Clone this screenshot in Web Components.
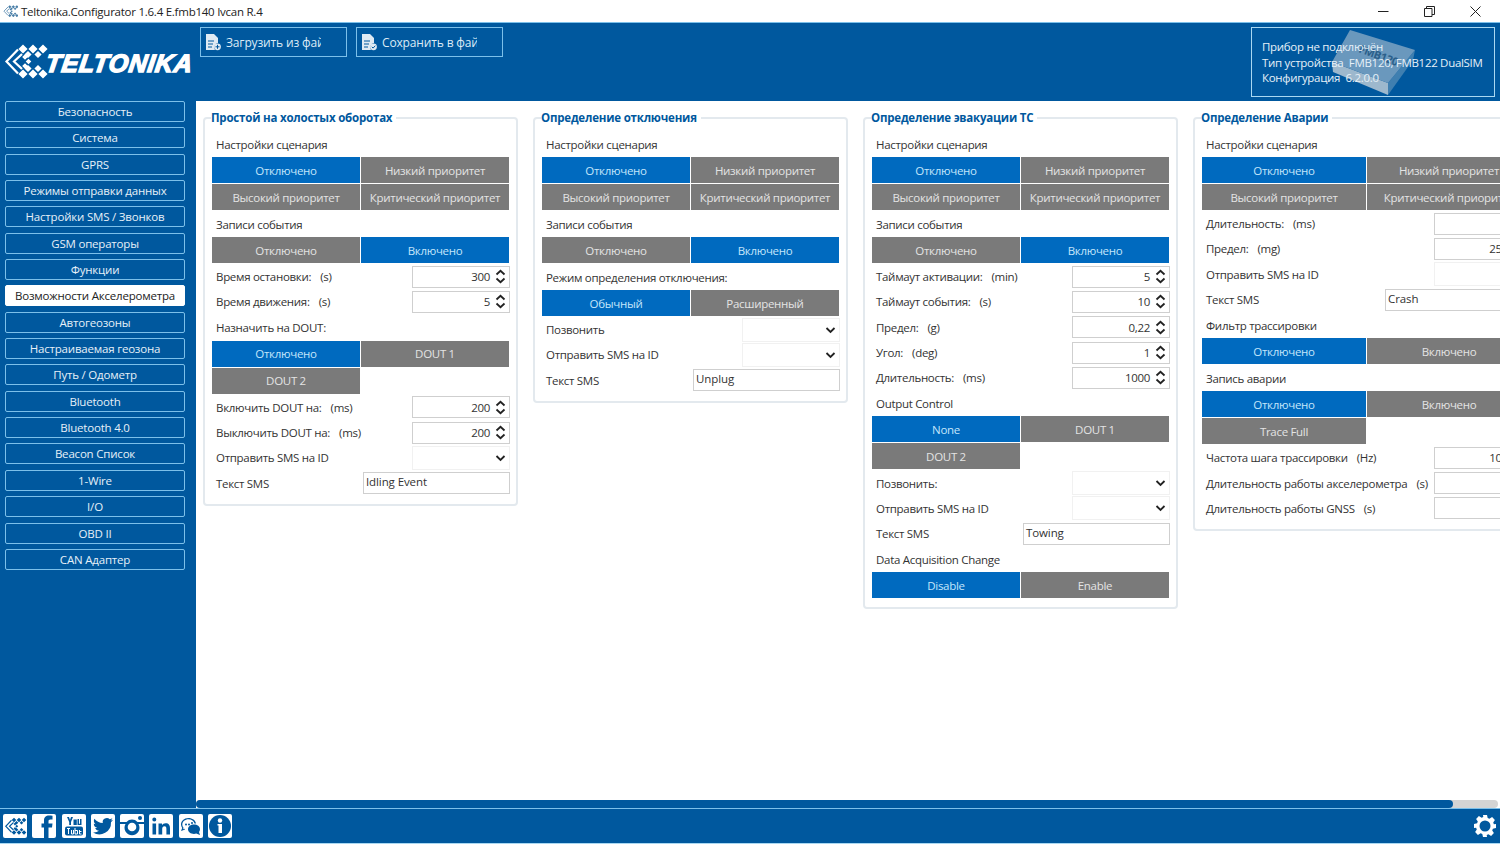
<!DOCTYPE html>
<html lang="ru">
<head>
<meta charset="utf-8">
<title>Teltonika.Configurator</title>
<style>
  html, body { margin: 0; height: 100%; overflow: hidden; background: #fff; }
  body { font-family: "Open Sans", "Noto Sans", sans-serif; font-size: 11.5px; color: #333; }
</style>
</head>
<body>

<tk-app>
  <tk-titlebar slot="title">Teltonika.Configurator 1.6.4 E.fmb140 Ivcan R.4</tk-titlebar>
  <tk-header slot="header"></tk-header>
  <tk-nav slot="nav">
    <tk-nav-item>Безопасность</tk-nav-item>
    <tk-nav-item>Система</tk-nav-item>
    <tk-nav-item>GPRS</tk-nav-item>
    <tk-nav-item>Режимы отправки данных</tk-nav-item>
    <tk-nav-item>Настройки SMS / Звонков</tk-nav-item>
    <tk-nav-item>GSM операторы</tk-nav-item>
    <tk-nav-item>Функции</tk-nav-item>
    <tk-nav-item active>Возможности Акселерометра</tk-nav-item>
    <tk-nav-item>Автогеозоны</tk-nav-item>
    <tk-nav-item>Настраиваемая геозона</tk-nav-item>
    <tk-nav-item>Путь / Одометр</tk-nav-item>
    <tk-nav-item>Bluetooth</tk-nav-item>
    <tk-nav-item>Bluetooth 4.0</tk-nav-item>
    <tk-nav-item>Beacon Список</tk-nav-item>
    <tk-nav-item>1-Wire</tk-nav-item>
    <tk-nav-item>I/O</tk-nav-item>
    <tk-nav-item>OBD II</tk-nav-item>
    <tk-nav-item>CAN Адаптер</tk-nav-item>
  </tk-nav>

  <tk-panel title="Простой на холостых оборотах">
    <tk-label>Настройки сценария</tk-label>
    <tk-options selected="0" options="Отключено|Низкий приоритет|Высокий приоритет|Критический приоритет"></tk-options>
    <tk-label>Записи события</tk-label>
    <tk-options selected="1" options="Отключено|Включено"></tk-options>
    <tk-field label="Время остановки:" unit="(s)" kind="spin" value="300"></tk-field>
    <tk-field label="Время движения:" unit="(s)" kind="spin" value="5"></tk-field>
    <tk-label>Назначить на DOUT:</tk-label>
    <tk-options selected="0" options="Отключено|DOUT 1|DOUT 2"></tk-options>
    <tk-field label="Включить DOUT на:" unit="(ms)" kind="spin" value="200"></tk-field>
    <tk-field label="Выключить DOUT на:" unit="(ms)" kind="spin" value="200"></tk-field>
    <tk-field label="Отправить SMS на ID" kind="select"></tk-field>
    <tk-field label="Текст SMS" kind="text" value="Idling Event"></tk-field>
  </tk-panel>

  <tk-panel title="Определение отключения">
    <tk-label>Настройки сценария</tk-label>
    <tk-options selected="0" options="Отключено|Низкий приоритет|Высокий приоритет|Критический приоритет"></tk-options>
    <tk-label>Записи события</tk-label>
    <tk-options selected="1" options="Отключено|Включено"></tk-options>
    <tk-label>Режим определения отключения:</tk-label>
    <tk-options selected="0" options="Обычный|Расширенный"></tk-options>
    <tk-field label="Позвонить" kind="select"></tk-field>
    <tk-field label="Отправить SMS на ID" kind="select"></tk-field>
    <tk-field label="Текст SMS" kind="text" value="Unplug"></tk-field>
  </tk-panel>

  <tk-panel title="Определение эвакуации ТС">
    <tk-label>Настройки сценария</tk-label>
    <tk-options selected="0" options="Отключено|Низкий приоритет|Высокий приоритет|Критический приоритет"></tk-options>
    <tk-label>Записи события</tk-label>
    <tk-options selected="1" options="Отключено|Включено"></tk-options>
    <tk-field label="Таймаут активации:" unit="(min)" kind="spin" value="5"></tk-field>
    <tk-field label="Таймаут события:" unit="(s)" kind="spin" value="10"></tk-field>
    <tk-field label="Предел:" unit="(g)" kind="spin" value="0,22"></tk-field>
    <tk-field label="Угол:" unit="(deg)" kind="spin" value="1"></tk-field>
    <tk-field label="Длительность:" unit="(ms)" kind="spin" value="1000"></tk-field>
    <tk-label>Output Control</tk-label>
    <tk-options selected="0" options="None|DOUT 1|DOUT 2"></tk-options>
    <tk-field label="Позвонить:" kind="select"></tk-field>
    <tk-field label="Отправить SMS на ID" kind="select"></tk-field>
    <tk-field label="Текст SMS" kind="text" value="Towing"></tk-field>
    <tk-label>Data Acquisition Change</tk-label>
    <tk-options selected="0" options="Disable|Enable"></tk-options>
  </tk-panel>

  <tk-panel wide title="Определение Аварии">
    <tk-label>Настройки сценария</tk-label>
    <tk-options selected="0" options="Отключено|Низкий приоритет|Высокий приоритет|Критический приоритет"></tk-options>
    <tk-field label="Длительность:" unit="(ms)" kind="spin" value=""></tk-field>
    <tk-field label="Предел:" unit="(mg)" kind="spin" value="250"></tk-field>
    <tk-field label="Отправить SMS на ID" kind="select"></tk-field>
    <tk-field label="Текст SMS" kind="text" value="Crash"></tk-field>
    <tk-label>Фильтр трассировки</tk-label>
    <tk-options selected="0" options="Отключено|Включено"></tk-options>
    <tk-label>Запись аварии</tk-label>
    <tk-options selected="0" options="Отключено|Включено|Trace Full"></tk-options>
    <tk-field label="Частота шага трассировки" unit="(Hz)" kind="spin" value="100"></tk-field>
    <tk-field label="Длительность работы акселерометра" unit="(s)" kind="spin" value=""></tk-field>
    <tk-field label="Длительность работы GNSS" unit="(s)" kind="spin" value=""></tk-field>
  </tk-panel>

  <tk-footer slot="footer"></tk-footer>
</tk-app>

<script>
const BLUE = "#00589e";

// chevrons and diamonds of the logo, in a 50x50 box
function logoShapes(color) {
  let d = "";
  const dia = (x, y, r) => { d += `M${x} ${y - r}L${x + r} ${y}L${x} ${y + r}L${x - r} ${y}Z`; };
  [23, 33, 43].forEach(x => { dia(x, 13, 4.6); dia(x, 38, 4.6); });
  [28, 38].forEach(x => { dia(x, 18.5, 3.6); dia(x, 32.5, 3.6); });
  dia(25, 21, 2.8); dia(28.5, 25.5, 2.8); dia(25, 30, 2.8);
  return `<path fill="${color}" d="${d}"/>
    <path fill="none" stroke="${color}" stroke-width="2.2" d="M18 13.500 6.500 25.500 18 37.500M22 18 14 25.500 22 33"/>`;
}
function logoMark(color, viewBox) {
  return `<svg viewBox="${viewBox}" width="100%" height="100%">${logoShapes(color)}</svg>`;
}

class TkApp extends HTMLElement {
  constructor() {
    super();
    this.attachShadow({ mode: "open" }).innerHTML = `
      <style>
        :host { display: grid; width: 1500px; height: 844px; overflow: hidden;
                grid-template-rows: 22px 79px 1fr 36px; grid-template-columns: 196px 1fr; background: ${BLUE}; }
        ::slotted([slot=title]) { grid-column: 1 / 3; }
        ::slotted([slot=header]) { grid-column: 1 / 3; }
        ::slotted([slot=footer]) { grid-column: 1 / 3; }
        #main { background: #fff; display: flex; flex-direction: column; min-width: 0; overflow: hidden; }
        #panels { flex: 1; display: flex; align-items: flex-start; gap: 15px; padding: 9px 0 0 7px; min-height: 0; }
        #track { height: 8px; margin-right: 2px; background: #d4d4d4; border-radius: 4px; }
        #thumb { width: 1257px; height: 100%; background: ${BLUE}; border-radius: 4px; }
      </style>
      <slot name="title"></slot>
      <slot name="header"></slot>
      <slot name="nav"></slot>
      <div id="main">
        <div id="panels"><slot></slot></div>
        <div id="track"><div id="thumb"></div></div>
      </div>
      <slot name="footer"></slot>`;
  }
}
customElements.define("tk-app", TkApp);

class TkTitlebar extends HTMLElement {
  constructor() {
    super();
    this.attachShadow({ mode: "open" }).innerHTML = `
      <style>
        :host { display: flex; align-items: center; height: 22px; background: #fff; color: #222; font-size: 11.5px; }
        #icon { width: 15px; height: 12px; margin: 0 3px 0 3px; }
        #text { flex: 1; letter-spacing: -0.25px; }
        .win { width: 46px; height: 22px; display: flex; align-items: center; justify-content: center; }
      </style>
      <div id="icon">${logoMark("#4a7fa8", "4 8 42 34")}</div>
      <div id="text"><slot></slot></div>
      <div class="win"><svg width="11" height="11"><path d="M0 5.5H10.5" stroke="#222"/></svg></div>
      <div class="win"><svg width="11" height="11" fill="none" stroke="#222"><path d="M.5 2.5h7.500v8h-7.500zM2.500 2.500v-2h8v8h-2.500"/></svg></div>
      <div class="win" style="margin-right:2px"><svg width="11" height="11" stroke="#222"><path d="M.5.5l10 10M10.500.5l-10 10"/></svg></div>`;
  }
}
customElements.define("tk-titlebar", TkTitlebar);

class TkHeader extends HTMLElement {
  constructor() {
    super();
    const fileIcon = badge => `<svg width="15" height="17" viewBox="0 0 15 17">
      <path fill="#dfeaf3" d="M0 0h8l4 4v5a4.500 4.500 0 0 0-3 7H0z"/>
      <path stroke="${BLUE}" d="M2 7h6M2 10h5M2 13h4"/>
      <circle cx="11.500" cy="12.800" r="3.400" fill="#dfeaf3"/>
      <path stroke="${BLUE}" fill="none" d="${badge}"/></svg>`;
    this.attachShadow({ mode: "open" }).innerHTML = `
      <style>
        :host { display: flex; height: 79px; background: ${BLUE}; border-top: 1px solid #7cc0ea; box-sizing: border-box; color: #dcebf6; }
        #logo { width: 200px; flex: none; display: flex; align-items: center; box-sizing: border-box; height: 78px; }
        #mark { width: 50px; height: 50px; flex: none; margin: -3px -4px 0 0; }
        #word { font: italic 700 25px "Liberation Sans", sans-serif; color: #fff; -webkit-text-stroke: 1.4px #fff; letter-spacing: 0.7px;
                margin-top: 3px; transform: skewX(-8deg); }
        #files { display: flex; gap: 9px; align-items: flex-start; padding-top: 4px; font-size: 12px; letter-spacing: -0.15px; }
        .file { width: 147px; height: 30px; box-sizing: border-box; border: 1px solid #7cc0ea; display: flex; align-items: center; gap: 5px; padding-left: 5px; overflow: hidden; white-space: nowrap; }
        .file span { width: 95px; overflow: hidden; }
        #spacer { flex: 1; }
        #device { position: relative; width: 244px; height: 70px; box-sizing: border-box; margin: 4px 5px 0 0; border: 1px solid #a9d8f2;
                  padding: 11px 0 0 10px; line-height: 15.5px; white-space: nowrap; color: #e6f0f8; font-size: 11.5px; letter-spacing: -0.3px; }
        #chip { position: absolute; left: 80px; top: 0; width: 85px; height: 68px; }
        #lines { position: relative; }
      </style>
      <div id="logo"><div id="mark">${logoMark("#fff", "0 0 50 50")}</div><div id="word">TELTONIKA</div></div>
      <div id="files">
        <div class="file">${fileIcon("M11.500 10.800v4M9.500 12.800h4")}<span>Загрузить из файла</span></div>
        <div class="file">${fileIcon("M9.800 12.800l1.300 1.300 2.200-2.400")}<span>Сохранить в файл</span></div>
      </div>
      <div id="spacer"></div>
      <div id="device">
        <svg id="chip" viewBox="0 0 85 68">
          <path fill="#9db8cd" d="M0 34 56 55 56 67 1 44Z"/>
          <path fill="#3f7fb0" d="M56 55 83 22 81 32 56 67Z"/>
          <path fill="#6a98bd" d="M18 2 83 22 56 55 0 34Z"/>
          <text x="0" y="0" transform="translate(26 24) rotate(20)" font-size="11" font-weight="700" fill="#2a5f8a">FMB120</text>
        </svg>
        <div id="lines">Прибор не подключён<br>Тип устройства &nbsp;FMB120, FMB122 DualSIM<br>Конфигурация &nbsp;6.2.0.0</div>
      </div>`;
  }
}
customElements.define("tk-header", TkHeader);

class TkNav extends HTMLElement {
  constructor() {
    super();
    this.attachShadow({ mode: "open" }).innerHTML = `
      <style>
        :host { display: flex; flex-direction: column; gap: 5.35px; padding: 0 11px 0 5px; background: ${BLUE}; }
      </style><slot></slot>`;
  }
}
customElements.define("tk-nav", TkNav);

class TkNavItem extends HTMLElement {
  constructor() {
    super();
    this.attachShadow({ mode: "open" }).innerHTML = `
      <style>
        :host { display: flex; align-items: center; justify-content: center; height: 21px; box-sizing: border-box;
                border: 1.5px solid #7cc0ea; border-radius: 2px; color: #e6f0f8; font-size: 11.5px; white-space: nowrap; letter-spacing: -0.2px; }
        :host([active]) { background: #fff; color: #222; border-color: #fff; }
      </style><slot></slot>`;
  }
}
customElements.define("tk-nav-item", TkNavItem);

class TkPanel extends HTMLElement {
  constructor() {
    super();
    this.attachShadow({ mode: "open" }).innerHTML = `
      <style>
        :host { display: block; flex: none; width: 315px; --btn-w: 148px; --val-gap: 5px; }
        :host([wide]) { width: 347px; --btn-w: 164px; --val-gap: 9px; }
        fieldset { margin: 0; padding: 5px 6px 8px 7px; border: 2px solid #e3e9ee; border-radius: 4px; min-width: 0; }
        legend { margin-left: -1px; padding: 0 4px 0 0; font-weight: 700; font-size: 11.5px; line-height: 16px; color: #00589e; white-space: nowrap; letter-spacing: -0.2px; }
      </style>
      <fieldset><legend></legend><slot></slot></fieldset>`;
  }
  connectedCallback() {
    this.shadowRoot.querySelector("legend").textContent = this.getAttribute("title");
  }
}
customElements.define("tk-panel", TkPanel);

class TkLabel extends HTMLElement {
  constructor() {
    super();
    this.attachShadow({ mode: "open" }).innerHTML = `
      <style>
        :host { display: flex; align-items: center; height: 26px; padding-left: 4px; color: #333; white-space: nowrap; letter-spacing: -0.3px; }
      </style><slot></slot>`;
  }
}
customElements.define("tk-label", TkLabel);

class TkOptions extends HTMLElement {
  constructor() {
    super();
    this.attachShadow({ mode: "open" }).innerHTML = `
      <style>
        :host { display: grid; grid-template-columns: var(--btn-w) var(--btn-w); gap: 1px; padding: 0 0 1px 0; }
        div { height: 26px; display: flex; align-items: center; justify-content: center; background: #7a7a7a; color: #e4e4e4; white-space: nowrap; letter-spacing: -0.3px; overflow: hidden; }
        div.on { background: #006abf; color: #c4e6fb; }
      </style>`;
  }
  connectedCallback() {
    const selected = parseInt(this.getAttribute("selected"));
    this.getAttribute("options").split("|").forEach((text, i) => {
      const b = document.createElement("div");
      b.textContent = text;
      if (i == selected) b.className = "on";
      this.shadowRoot.appendChild(b);
    });
  }
}
customElements.define("tk-options", TkOptions);

class TkField extends HTMLElement {
  constructor() {
    super();
    this.attachShadow({ mode: "open" }).innerHTML = `
      <style>
        :host { display: flex; align-items: center; height: 25.3px; padding-left: 4px; color: #333; white-space: nowrap; letter-spacing: -0.3px; }
        #label { flex: 1; }
        #unit { margin-left: 9px; }
        #box { box-sizing: border-box; height: 22px; border: 1px solid #cfcfcf; background: #fff; display: flex; align-items: center; width: 98px; }
        #box.select { border-color: #f1f1f1; justify-content: flex-end; height: 24px; padding-right: 3px; }
        #box.text { width: 147px; height: 22px; align-items: flex-start; padding: 0 0 0 2px; line-height: 17px; letter-spacing: -0.1px; }
        #box.spin { justify-content: flex-end; padding-right: 3px; }
        #value { margin-right: var(--val-gap); color: #333; }
        svg { display: block; }
      </style>
      <span id="label"></span><span id="box"></span>`;
  }
  connectedCallback() {
    const root = this.shadowRoot;
    const unit = this.getAttribute("unit");
    root.getElementById("label").innerHTML = this.getAttribute("label") + (unit ? `<span id="unit">${unit}</span>` : "");
    const kind = this.getAttribute("kind");
    const value = this.getAttribute("value") || "";
    const box = root.getElementById("box");
    box.className = kind;
    if (kind == "spin") {
      box.innerHTML = `<span id="value">${value}</span>
        <svg width="11" height="15" fill="none" stroke="#222" stroke-width="1.8"><path d="M1.500 5.500 5.500 1.800 9.500 5.500M1.500 9.500 5.500 13.200 9.500 9.500"/></svg>`;
    } else if (kind == "select") {
      box.innerHTML = `<svg width="11" height="8" fill="none" stroke="#222" stroke-width="1.8"><path d="M1.500 2 5.500 6 9.500 2"/></svg>`;
    } else {
      box.textContent = value;
    }
  }
}
customElements.define("tk-field", TkField);

class TkFooter extends HTMLElement {
  constructor() {
    super();
    const tile = inner => `<svg viewBox="0 0 24 24" width="24" height="24"><rect width="24" height="24" rx="2" fill="#fff"/>${inner}</svg>`;
    const c = BLUE;
    this.attachShadow({ mode: "open" }).innerHTML = `
      <style>
        :host { display: flex; align-items: center; gap: 5.3px; height: 36px; box-sizing: border-box; background: ${BLUE}; border-top: 1px solid #7cc0ea; border-bottom: 1px solid #a9d8f2; padding: 0 3px; }
        svg { display: block; flex: none; }
        #gear { margin-left: auto; }
      </style>
      ${tile(`<g transform="translate(-.5 -.5) scale(.5)">${logoShapes(c)}</g>`)}
      ${tile(`<path fill="${c}" d="M12 24V13.500H9.500V9.500H12V6.500C12 3 14 1.500 17 1.500c1.500 0 3 .1 3.500.2V5.500H18.500c-1.500 0-2 .7-2 1.900V9.500H20.500L20 13.500H16.500V24z"/>`)}
      ${tile(`<path fill="${c}" d="M5 3h2l1 3 1-3h2L9 8v3H7.200V8zM11.500 5.500h3.300v5.500h-3.300zM15.500 5h1.500v4.800h1V5h1.500v6h-4z"/><rect x="3" y="12.500" width="18" height="9" rx="2" fill="${c}"/><path stroke="#fff" d="M5 14.500h3M6.500 14.500V20M9.500 16v4h2v-4M13 14v6M13 16.500h2.500V20H13M17.500 17.500h2M17.500 16v4h2" fill="none"/>`)}
      ${tile(`<path fill="${c}" d="M22 5.800c-.8.4-1.500.6-2.400.7.900-.5 1.500-1.300 1.800-2.200-.8.500-1.700.8-2.600 1a4.100 4.100 0 0 0-7 3.700C8.400 8.800 5.400 7.200 3.400 4.700c-1.100 1.900-.5 4.300 1.300 5.500-.7 0-1.300-.2-1.900-.5 0 2 1.400 3.700 3.300 4.100-.6.200-1.200.2-1.900.1.500 1.600 2 2.800 3.800 2.800A8.300 8.300 0 0 1 2 18.400 11.600 11.600 0 0 0 20 8.200c.8-.6 1.500-1.400 2-2.400z"/>`)}
      ${tile(`<path fill="${c}" d="M0 8h6.500a7.500 7.500 0 0 1 11 0H24v2h-5.500a7.500 7.500 0 1 1-13 0H0z"/><circle cx="12" cy="13" r="4.300" fill="#fff"/><circle cx="20" cy="4" r="2" fill="${c}"/>`)}
      ${tile(`<path fill="${c}" d="M3.500 9.500h3.600V20.500H3.500zM5.300 3.500a2 2 0 1 1 0 4 2 2 0 0 1 0-4zM9.500 9.500H13v1.600c.6-1 1.900-1.900 3.600-1.900 3.300 0 4.400 2 4.400 5.200v6.100h-3.600v-5.400c0-1.500-.3-2.800-1.900-2.800s-2.300 1.200-2.300 2.800v5.400H9.500z"/>`)}
      ${tile(`<path fill="${c}" d="M9.500 4C5 4 2 7 2 10.500c0 1.300.5 2.500 1.200 3.500L2 17l3.500-1.200.3.200-.1-1.300-1.600.5.500-1.400C3.800 13 3.300 11.800 3.300 10.500 3.300 7.700 6 5.300 9.500 5.300c3 0 5.500 1.800 6 4.200H17C16.400 6.300 13.300 4 9.500 4z"/><path fill="${c}" d="M15 10.500c-3.300 0-6 2.100-6 4.700s2.700 4.700 6 4.700c.8 0 1.500-.1 2.200-.3l3.800 1.400-1-3c.6-.8 1-1.700 1-2.800 0-2.600-2.700-4.700-6-4.700z"/><circle cx="7" cy="10.500" r="1" fill="${c}"/><circle cx="10" cy="10.500" r="1" fill="${c}"/><circle cx="13" cy="9" r="1" fill="${c}"/>`)}
      ${tile(`<circle cx="12" cy="12" r="11" fill="${c}"/><circle cx="12" cy="6.500" r="2.200" fill="#fff"/><path fill="#fff" d="M9.500 10h4.500v9h-3.500v-7.500h-1z"/>`)}
      <svg id="gear" viewBox="0 0 24 24" width="24" height="24">
        <path fill="#fff" d="M10 1h4l.7 3.100 1.700.7 2.700-1.700 2.800 2.800-1.700 2.700.7 1.700L23 10v4l-3.100.7-.7 1.700 1.700 2.700-2.800 2.800-2.700-1.700-1.700.7L14 23h-4l-.7-3.100-1.700-.7-2.700 1.700-2.800-2.800 1.700-2.700-.7-1.700L1 14v-4l3.100-.7.700-1.700-1.700-2.700 2.800-2.800 2.700 1.700 1.700-.7z"/>
        <circle cx="12" cy="12" r="5.500" fill="${c}"/>
      </svg>`;
  }
}
customElements.define("tk-footer", TkFooter);
</script>
</body>
</html>
